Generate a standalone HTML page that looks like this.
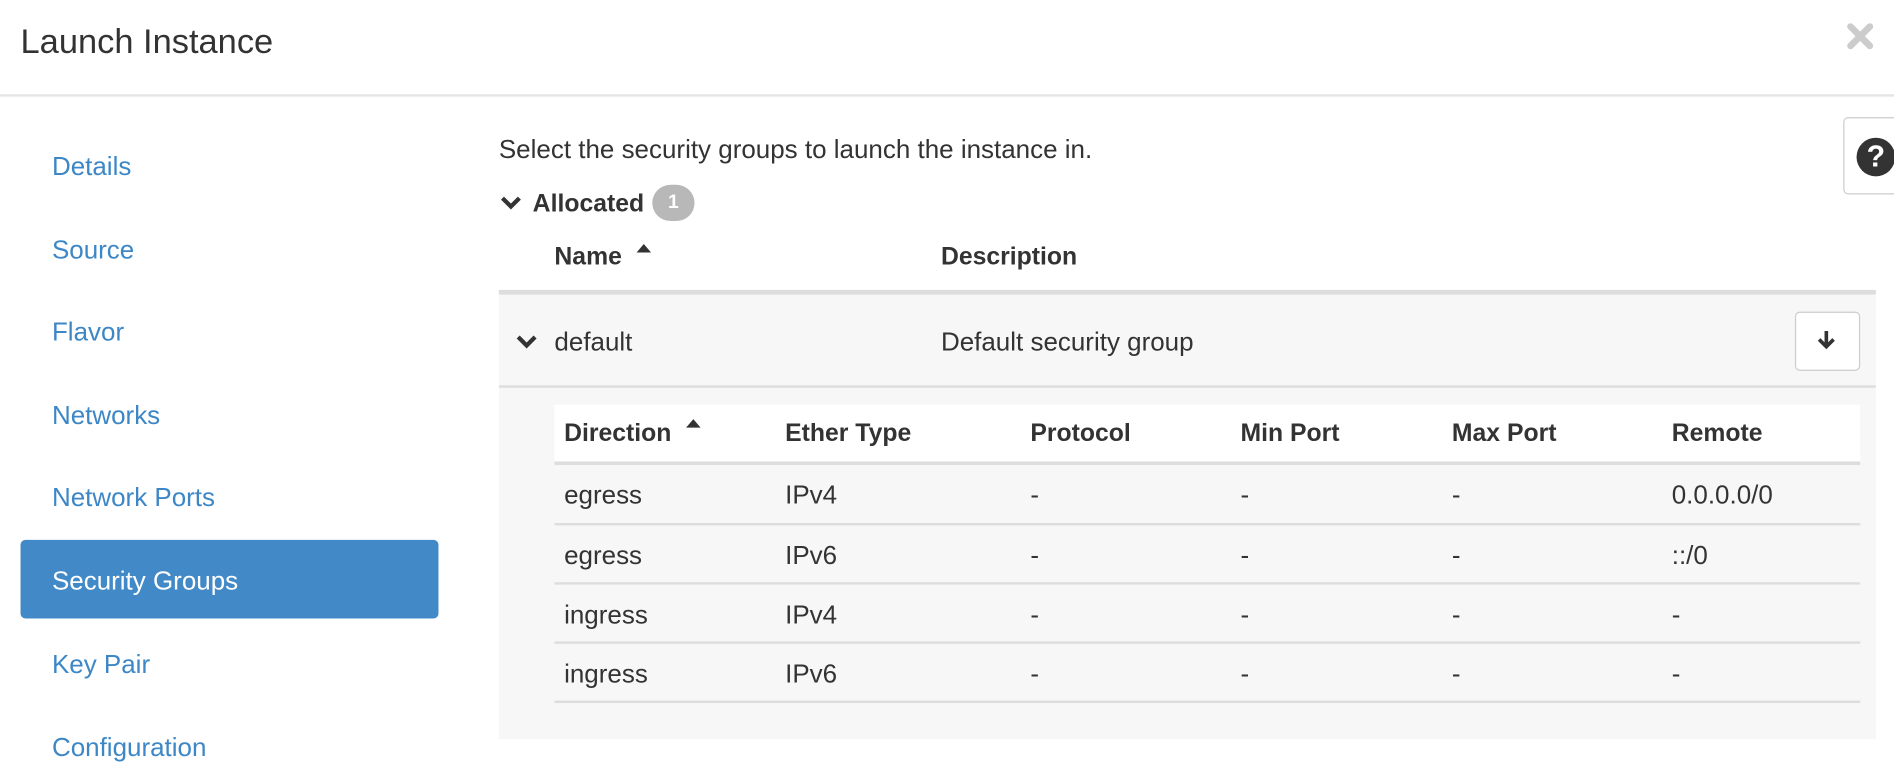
<!DOCTYPE html>
<html><head><style>
html,body{margin:0;padding:0;background:#fff;width:1894px;height:738px;overflow:hidden}
#w{position:absolute;left:0;top:0;width:1568px;height:612px;transform:scale(1.2079);transform-origin:0 0;font-family:"Liberation Sans",sans-serif;color:#333}
.a{position:absolute;white-space:nowrap}
.nav{position:absolute;left:43px;font-size:21.5px;color:#3d87c6;line-height:24px}
.b{font-weight:bold;font-size:20.5px!important}
.t{font-size:21.5px;line-height:24px}
.hl{position:absolute;background:#ddd}
</style></head><body><div id="w">
<div class="a" style="left:17px;top:18px;font-size:28.5px;line-height:34px;color:#333">Launch Instance</div>
<svg class="a" style="left:1528px;top:18px" width="24" height="24" viewBox="0 0 24 24"><path d="M4 4L20 20M20 4L4 20" stroke="#ccc" stroke-width="5.5" stroke-linecap="round"/></svg>
<div class="hl" style="left:0;top:78px;width:1568px;height:2px;background:#e5e5e5"></div>

<div class="nav" style="top:126px">Details</div>
<div class="nav" style="top:195px">Source</div>
<div class="nav" style="top:263px">Flavor</div>
<div class="nav" style="top:332px">Networks</div>
<div class="nav" style="top:400px">Network Ports</div>
<div class="a" style="left:17px;top:447px;width:346px;height:65px;background:#4189c7;border-radius:4px"></div>
<div class="nav" style="top:469px;color:#fff">Security Groups</div>
<div class="nav" style="top:538px">Key Pair</div>
<div class="nav" style="top:607px">Configuration</div>

<div class="a" style="left:1526px;top:97px;width:50px;height:62px;border:1px solid #ccc;border-radius:4px;background:#fff"></div>
<div class="a" style="left:1537px;top:114px;width:32px;height:32px;border-radius:50%;background:#333;color:#fff;font-weight:bold;font-size:25px;line-height:32px;text-align:center">?</div>

<div class="a t" style="left:413px;top:112px">Select the security groups to launch the instance in.</div>
<svg class="a" style="left:414px;top:161px" width="18" height="14" viewBox="0 0 18 14"><path d="M2 3L9 10L16 3" stroke="#333" stroke-width="3.5" fill="none"/></svg>
<div class="a t b" style="left:441px;top:157px">Allocated</div>
<div class="a" style="left:540px;top:153px;width:35px;height:30px;border-radius:15px;background:#b8b8b8;color:#fff;font-weight:bold;font-size:16px;line-height:30px;text-align:center">1</div>

<div class="a t b" style="left:459px;top:201px">Name</div>
<svg class="a" style="left:526px;top:200px" width="14" height="10"><path d="M1 9L7 2L13 9Z" fill="#333"/></svg>
<div class="a t b" style="left:779px;top:201px">Description</div>
<div class="hl" style="left:413px;top:240px;width:1140px;height:4px"></div>
<div class="a" style="left:413px;top:244px;width:1140px;height:368px;background:#f7f7f7"></div>
<svg class="a" style="left:427px;top:276px" width="18" height="14" viewBox="0 0 18 14"><path d="M2 3L9 10L16 3" stroke="#333" stroke-width="3.5" fill="none"/></svg>
<div class="a t" style="left:459px;top:271px">default</div>
<div class="a t" style="left:779px;top:271px">Default security group</div>
<div class="a" style="left:1486px;top:258px;width:52px;height:47px;border:1px solid #ccc;border-radius:4px;background:#fff"></div>
<svg class="a" style="left:1503px;top:272px" width="18" height="18" viewBox="0 0 18 18"><path d="M9 2V14M3 9L9 15L15 9" stroke="#333" stroke-width="3" fill="none"/></svg>
<div class="hl" style="left:413px;top:319px;width:1140px;height:2px"></div>

<div class="a" style="left:459px;top:335px;width:1081px;height:48px;background:#fff"></div>
<div class="a t b" style="left:467px;top:347px">Direction</div>
<svg class="a" style="left:567px;top:345px" width="14" height="10"><path d="M1 9L7 2L13 9Z" fill="#333"/></svg>
<div class="a t b" style="left:650px;top:347px">Ether Type</div>
<div class="a t b" style="left:853px;top:347px">Protocol</div>
<div class="a t b" style="left:1027px;top:347px">Min Port</div>
<div class="a t b" style="left:1202px;top:347px">Max Port</div>
<div class="a t b" style="left:1384px;top:347px">Remote</div>
<div class="hl" style="left:459px;top:382px;width:1081px;height:3px"></div>

<div class="a t" style="left:467px;top:398px">egress</div><div class="a t" style="left:650px;top:398px">IPv4</div><div class="a t" style="left:853px;top:398px">-</div><div class="a t" style="left:1027px;top:398px">-</div><div class="a t" style="left:1202px;top:398px">-</div><div class="a t" style="left:1384px;top:398px">0.0.0.0/0</div>
<div class="hl" style="left:459px;top:433px;width:1081px;height:2px"></div>
<div class="a t" style="left:467px;top:448px">egress</div><div class="a t" style="left:650px;top:448px">IPv6</div><div class="a t" style="left:853px;top:448px">-</div><div class="a t" style="left:1027px;top:448px">-</div><div class="a t" style="left:1202px;top:448px">-</div><div class="a t" style="left:1384px;top:448px">::/0</div>
<div class="hl" style="left:459px;top:482px;width:1081px;height:2px"></div>
<div class="a t" style="left:467px;top:497px">ingress</div><div class="a t" style="left:650px;top:497px">IPv4</div><div class="a t" style="left:853px;top:497px">-</div><div class="a t" style="left:1027px;top:497px">-</div><div class="a t" style="left:1202px;top:497px">-</div><div class="a t" style="left:1384px;top:497px">-</div>
<div class="hl" style="left:459px;top:531px;width:1081px;height:2px"></div>
<div class="a t" style="left:467px;top:546px">ingress</div><div class="a t" style="left:650px;top:546px">IPv6</div><div class="a t" style="left:853px;top:546px">-</div><div class="a t" style="left:1027px;top:546px">-</div><div class="a t" style="left:1202px;top:546px">-</div><div class="a t" style="left:1384px;top:546px">-</div>
<div class="hl" style="left:459px;top:580px;width:1081px;height:2px"></div>
</div></body></html>
